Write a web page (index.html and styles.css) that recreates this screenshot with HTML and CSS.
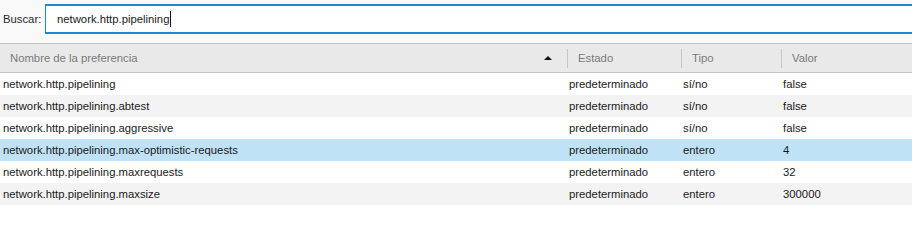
FILE: index.html
```html
<!DOCTYPE html>
<html lang="es">
<head>
<meta charset="utf-8">
<title>about:config</title>
<link rel="stylesheet" href="styles.css">
</head>
<body>
<div class="search-bar">
  <label class="search-label">Buscar:</label>
  <div class="search-input"><span class="search-text">network.http.pipelining</span><span class="caret"></span></div>
</div>
<div class="table">
  <div class="row header">
    <div class="cell c1 head-cell"><span>Nombre de la preferencia</span><span class="sort-arrow"></span></div>
    <div class="cell c2 head-cell"><span class="sep"></span>Estado</div>
    <div class="cell c3 head-cell"><span class="sep"></span>Tipo</div>
    <div class="cell c4 head-cell"><span class="sep"></span>Valor</div>
  </div>
  <div class="row">
    <div class="cell c1">network.http.pipelining</div>
    <div class="cell c2">predeterminado</div>
    <div class="cell c3">sí/no</div>
    <div class="cell c4">false</div>
  </div>
  <div class="row alt">
    <div class="cell c1">network.http.pipelining.abtest</div>
    <div class="cell c2">predeterminado</div>
    <div class="cell c3">sí/no</div>
    <div class="cell c4">false</div>
  </div>
  <div class="row">
    <div class="cell c1">network.http.pipelining.aggressive</div>
    <div class="cell c2">predeterminado</div>
    <div class="cell c3">sí/no</div>
    <div class="cell c4">false</div>
  </div>
  <div class="row selected">
    <div class="cell c1">network.http.pipelining.max-optimistic-requests</div>
    <div class="cell c2">predeterminado</div>
    <div class="cell c3">entero</div>
    <div class="cell c4">4</div>
  </div>
  <div class="row">
    <div class="cell c1">network.http.pipelining.maxrequests</div>
    <div class="cell c2">predeterminado</div>
    <div class="cell c3">entero</div>
    <div class="cell c4">32</div>
  </div>
  <div class="row alt">
    <div class="cell c1">network.http.pipelining.maxsize</div>
    <div class="cell c2">predeterminado</div>
    <div class="cell c3">entero</div>
    <div class="cell c4">300000</div>
  </div>
  <div class="row">
    <div class="cell c1"></div>
  </div>
</div>
</body>
</html>
```
FILE: styles.css
```css
html, body {
  margin: 0;
  padding: 0;
  background: #ffffff;
  overflow: hidden;
}
body {
  font-family: "Liberation Sans", Arial, Helvetica, sans-serif;
  font-size: 11.3px;
  color: #1a1a1a;
  width: 912px;
  height: 210px;
}
.search-bar {
  display: flex;
  align-items: center;
  height: 44px;
  background: #f9f9f9;
  border-bottom: 1px solid #c6c6c6;
  box-sizing: border-box;
}
.search-label {
  width: 45px;
  padding-left: 3px;
  box-sizing: border-box;
  color: #2a2a2a;
  margin-top: -5px;
}
.search-input {
  flex: 1;
  margin-right: -20px;
  height: 30px;
  margin-top: -5px;
  box-sizing: border-box;
  border: 1px solid #1b8ad6;
  border-top-width: 2px;
  border-bottom-width: 2px;
  background: #ffffff;
  display: flex;
  align-items: center;
  padding-left: 11px;
}
.search-text {
  color: #1a1a1a;
}
.caret {
  display: inline-block;
  width: 1px;
  height: 16px;
  background: #111;
  margin-left: 1px;
}
.table {
  display: flex;
  flex-direction: column;
}
.row {
  display: flex;
  height: 22px;
  align-items: center;
  background: #ffffff;
}
.row.alt {
  background: #f3f3f3;
}
.row.selected {
  background: #bfe2f6;
}
.row.header {
  height: 29px;
  background: #e9e9e9;
  border-bottom: 1px solid #c4c4c4;
  box-sizing: border-box;
}
.cell {
  box-sizing: border-box;
  padding-left: 3px;
  white-space: nowrap;
  overflow: hidden;
}
.c1 { width: 567px; }
.c2 { width: 114px; padding-left: 2px; }
.c3 { width: 100px; padding-left: 2px; }
.c4 { flex: 1; padding-left: 2px; }
.head-cell {
  position: relative;
  color: #7a7a7a;
  padding-left: 11px;
  height: 100%;
  display: flex;
  align-items: center;
}
.c1.head-cell {
  padding-left: 10px;
  padding-right: 15px;
  justify-content: space-between;
}
.sep {
  position: absolute;
  left: 0;
  top: 5px;
  bottom: 4px;
  width: 1px;
  background: #c6c6c6;
}
.sort-arrow {
  width: 0;
  height: 0;
  border-left: 4px solid transparent;
  border-right: 4px solid transparent;
  border-bottom: 4px solid #111;
}
```
